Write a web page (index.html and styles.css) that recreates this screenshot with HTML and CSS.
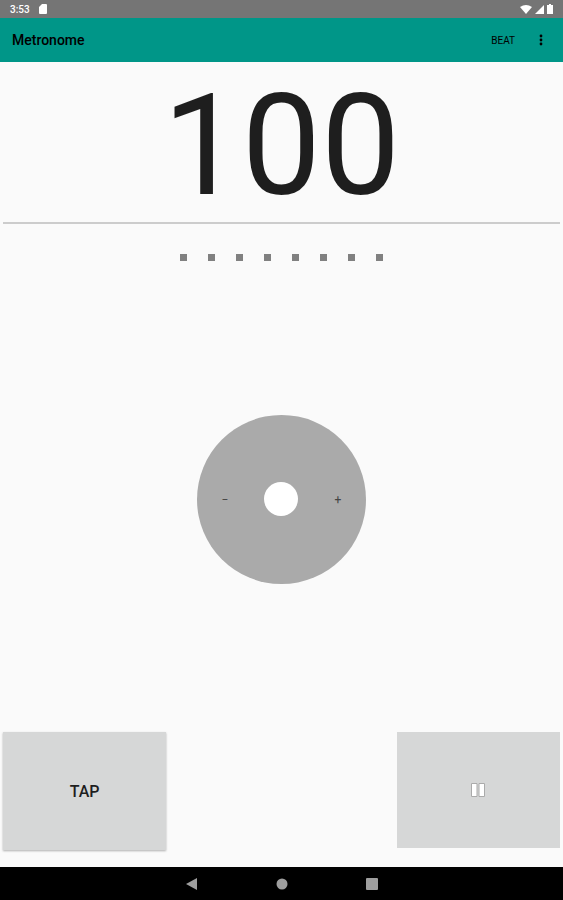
FILE: index.html
```html
<!DOCTYPE html>
<html lang="en">
<head>
    <meta charset="UTF-8">
    <meta name="viewport" content="width=device-width, initial-scale=1">
    <title>Metronome</title>
    <link rel="stylesheet" href="styles.css">
</head>
<body>
    <div class="status-bar">
        <span class="clock">3:53</span>
        <svg class="sd-card" width="8" height="10" viewBox="0 0 8 10"><path d="M3 0h4q1 0 1 1v8q0 1-1 1H1q-1 0-1-1V3z"/></svg>
        <div class="status-icons">
            <svg width="12" height="9" viewBox="0 0 12 9"><path d="M0 2Q6-2 12 2L6 9z"/></svg>
            <svg width="9" height="9" viewBox="0 0 9 9"><path d="M9 0v9H0z"/></svg>
            <svg width="6" height="10" viewBox="0 0 6 10"><path d="M2 0h2v1h2v9H0V1h2z"/></svg>
        </div>
    </div>

    <header class="app-bar">
        <h1>Metronome</h1>
        <button class="beat-button" type="button">BEAT</button>
        <button class="menu-button" type="button" aria-label="More options">
            <svg width="4" height="12" viewBox="0 0 4 12"><circle cx="2" cy="2" r="1.4"/><circle cx="2" cy="6" r="1.4"/><circle cx="2" cy="10" r="1.4"/></svg>
        </button>
    </header>

    <main>
        <div class="bpm">100</div>

        <div class="beats">
            <span></span><span></span><span></span><span></span><span></span><span></span><span></span><span></span>
        </div>

        <div class="wheel-area">
            <div class="wheel">
                <button type="button" aria-label="Slower">−</button>
                <div class="wheel-hole"></div>
                <button type="button" aria-label="Faster">+</button>
            </div>
        </div>

        <div class="controls">
            <button class="tap-button" type="button">TAP</button>
            <button class="pause-button" type="button" aria-label="Pause">
                <svg width="14" height="14" viewBox="0 0 14 14"><path d="M.5.5h5.500v13H.5zM8 .5h5.500v13H8z"/></svg>
            </button>
        </div>
    </main>

    <nav class="nav-bar">
        <button type="button" aria-label="Back"><svg width="12" height="12" viewBox="0 0 12 12"><path d="M11 0v12L0 6z"/></svg></button>
        <button type="button" aria-label="Home"><svg width="12" height="12" viewBox="0 0 12 12"><circle cx="6" cy="6" r="5.5"/></svg></button>
        <button type="button" aria-label="Recent apps"><svg width="12" height="12" viewBox="0 0 12 12"><rect width="12" height="12" rx="1"/></svg></button>
    </nav>
</body>
</html>
```
FILE: styles.css
```css
:root {
    --teal: #009688;
    --background: #FAFAFA;
    --button: #D6D7D7;
    --text: #1E1E1E;
}

* {
    box-sizing: border-box;
}

body {
    display: flex;
    flex-direction: column;
    min-height: 100vh;
    margin: 0;
    font-family: Roboto, sans-serif;
    background: var(--background);
    color: var(--text);
}

button {
    display: flex;
    align-items: center;
    justify-content: center;
    padding: 0;
    border: none;
    background: none;
    font-family: inherit;
    color: inherit;
    cursor: pointer;
}

svg {
    display: block;
}

.status-bar {
    display: flex;
    align-items: center;
    height: 18px;
    padding: 0 10px;
    background: #757575;
    color: white;
    fill: white;
}

.clock {
    font-size: 10px;
    font-weight: 500;
}

.sd-card {
    margin-left: 9px;
}

.status-icons {
    display: flex;
    align-items: center;
    gap: 3px;
    margin-left: auto;
}

.app-bar {
    display: flex;
    align-items: center;
    height: 44px;
    padding: 0 20px 0 12px;
    background: var(--teal);
    color: black;
}

.app-bar h1 {
    flex: 1;
    margin: 0;
    font-size: 14px;
    font-weight: 500;
}

.beat-button {
    font-size: 10px;
}

.menu-button {
    margin-left: 24px;
}

main {
    flex: 1;
    display: flex;
    flex-direction: column;
    padding: 0 3px;
}

.bpm {
    padding-top: 8px;
    border-bottom: 2px solid #CCCCCC;
    font-size: 141px;
    line-height: 152px;
    text-align: center;
}

.beats {
    display: flex;
    justify-content: center;
    gap: 21px;
    padding: 30px 0 6px;
}

.beats span {
    width: 7px;
    height: 7px;
    background: #808080;
}

.wheel-area {
    flex: 1;
    display: flex;
    align-items: center;
    justify-content: center;
}

.wheel {
    display: flex;
    align-items: center;
    justify-content: space-between;
    width: 30vw;
    aspect-ratio: 1;
    padding: 0 20px;
    border-radius: 50%;
    background: #AAAAAA;
}

.wheel button {
    width: 16px;
    height: 16px;
    padding-top: 2px;
    font-size: 12px;
    color: #444444;
}

.wheel-hole {
    width: 34px;
    height: 34px;
    border-radius: 50%;
    background: white;
}

.controls {
    display: flex;
    align-items: flex-start;
    justify-content: space-between;
    padding-bottom: 17px;
}

.controls button {
    width: 29vw;
    height: 116px;
    background: var(--button);
}

.controls .tap-button {
    height: 118px;
    box-shadow: 0 1px 2px rgba(0, 0, 0, 0.3);
    font-size: 16px;
    font-weight: 500;
}

.pause-button svg {
    fill: white;
    stroke: #AAAAAA;
}

.nav-bar {
    display: flex;
    align-items: center;
    justify-content: center;
    gap: 78px;
    height: 33px;
    background: black;
    fill: #9E9E9E;
}
```
